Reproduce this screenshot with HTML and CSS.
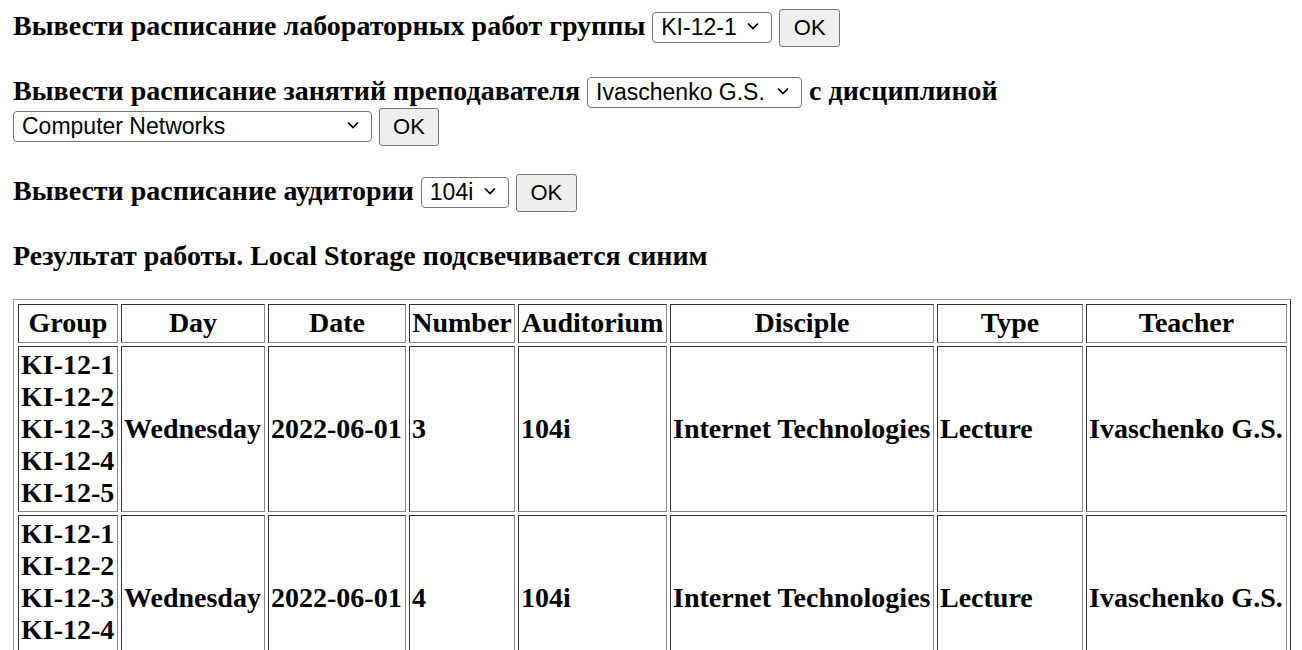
FILE: index.html
```html
<!DOCTYPE html>
<html lang="ru">
<head>
<meta charset="utf-8">
<title>Расписание</title>
<link rel="stylesheet" href="styles.css">
</head>
<body>
<form class="row row-1">
  <span class="label">Вывести расписание лабораторных работ группы</span>
  <span class="select-wrap w-group"><select class="select"><option>KI-12-1</option><option>KI-12-2</option><option>KI-12-3</option><option>KI-12-4</option><option>KI-12-5</option></select><svg class="chev" width="12" height="8" viewBox="0 0 12 8"><polyline points="1,1.5 6,6.5 11,1.5" fill="none" stroke="#000" stroke-width="1.7"/></svg></span>
  <button type="button" class="btn">OK</button>
</form>
<form class="row row-2">
  <span class="label">Вывести расписание занятий преподавателя</span>
  <span class="select-wrap w-teacher"><select class="select"><option>Ivaschenko G.S.</option></select><svg class="chev" width="12" height="8" viewBox="0 0 12 8"><polyline points="1,1.5 6,6.5 11,1.5" fill="none" stroke="#000" stroke-width="1.7"/></svg></span>
  <span class="label">с дисциплиной</span>
  <span class="select-wrap w-disc"><select class="select"><option>Computer Networks</option><option>Internet Technologies</option></select><svg class="chev" width="12" height="8" viewBox="0 0 12 8"><polyline points="1,1.5 6,6.5 11,1.5" fill="none" stroke="#000" stroke-width="1.7"/></svg></span>
  <button type="button" class="btn btn-narrow">OK</button>
</form>
<form class="row row-3">
  <span class="label">Вывести расписание аудитории</span>
  <span class="select-wrap w-aud"><select class="select"><option>104i</option></select><svg class="chev" width="12" height="8" viewBox="0 0 12 8"><polyline points="1,1.5 6,6.5 11,1.5" fill="none" stroke="#000" stroke-width="1.7"/></svg></span>
  <button type="button" class="btn">OK</button>
</form>
<div class="row row-4">Результат работы. Local Storage подсвечивается синим</div>
<table class="schedule">
  <thead>
    <tr>
      <th class="c-group">Group</th>
      <th class="c-day">Day</th>
      <th class="c-date">Date</th>
      <th class="c-num">Number</th>
      <th class="c-aud">Auditorium</th>
      <th class="c-disc">Disciple</th>
      <th class="c-type">Type</th>
      <th class="c-teacher">Teacher</th>
    </tr>
  </thead>
  <tbody>
    <tr>
      <td>KI-12-1<br>KI-12-2<br>KI-12-3<br>KI-12-4<br>KI-12-5</td>
      <td>Wednesday</td>
      <td>2022-06-01</td>
      <td>3</td>
      <td>104i</td>
      <td>Internet Technologies</td>
      <td>Lecture</td>
      <td>Ivaschenko G.S.</td>
    </tr>
    <tr>
      <td>KI-12-1<br>KI-12-2<br>KI-12-3<br>KI-12-4<br>KI-12-5</td>
      <td>Wednesday</td>
      <td>2022-06-01</td>
      <td>4</td>
      <td>104i</td>
      <td>Internet Technologies</td>
      <td>Lecture</td>
      <td>Ivaschenko G.S.</td>
    </tr>
  </tbody>
</table>
</body>
</html>
```
FILE: styles.css
```css
html, body {
  background: #fff;
}
body {
  margin: 0;
  padding: 0 11px 20px 13px;
  font-family: "Liberation Serif", "Times New Roman", serif;
  font-size: 28px;
  font-weight: bold;
  color: #000;
}
.row {
  display: block;
  margin: 0;
  line-height: normal;
}
.row-1 { margin-top: 9px; }
.row-2 { margin-top: 28px; }
.row-3 { margin-top: 28px; }
.row-4 { margin-top: 27.5px; }
.label {
  font-weight: bold;
}
.select-wrap {
  position: relative;
  display: inline-block;
}
.select {
  -webkit-appearance: none;
  appearance: none;
  box-sizing: border-box;
  height: 31px;
  width: 100%;
  margin: 0;
  padding: 3px 30px 3px 8px;
  font-family: "Liberation Sans", Arial, sans-serif;
  font-size: 23px;
  font-weight: normal;
  line-height: 23px;
  color: #000;
  background: #fff;
  border: 1px solid #767676;
  border-radius: 4px;
  vertical-align: baseline;
}
.chev {
  position: absolute;
  right: 13px;
  top: 12px;
  pointer-events: none;
}
.w-group { width: 120px; }
.w-teacher { width: 215px; }
.w-disc { width: 359px; }
.w-aud { width: 88px; }
.btn {
  box-sizing: border-box;
  width: 61px;
  height: 38px;
  margin: 0;
  padding: 5px 0 6px;
  font-family: "Liberation Sans", Arial, sans-serif;
  font-size: 22px;
  font-weight: normal;
  line-height: 25px;
  color: #000;
  background: #efefef;
  border: 1px solid #767676;
  border-radius: 3px;
  vertical-align: baseline;
}
.btn-narrow { width: 60px; }
.schedule {
  width: 100%;
  margin-top: 27px;
  padding: 1px 0 0 1px;
  table-layout: fixed;
  border-collapse: separate;
  border-spacing: 3px;
  border: 1px solid;
  border-color: #a0a0a0 #333 #333 #a0a0a0;
}
.schedule th,
.schedule td {
  box-sizing: border-box;
  border: 1px solid;
  border-color: #333 #8a8a8a #8a8a8a #333;
  font-weight: bold;
  line-height: normal;
  vertical-align: middle;
  white-space: nowrap;
}
.schedule th {
  padding: 2.5px 1px;
  text-align: center;
}
.schedule td {
  padding: 2px 2px;
  text-align: left;
}
.c-group { width: 100px; }
.c-day { width: 144px; }
.c-date { width: 138px; }
.c-num { width: 106px; }
.c-aud { width: 149px; }
.c-disc { width: 264px; }
.c-type { width: 146px; }
.c-teacher { width: 201px; }
```
